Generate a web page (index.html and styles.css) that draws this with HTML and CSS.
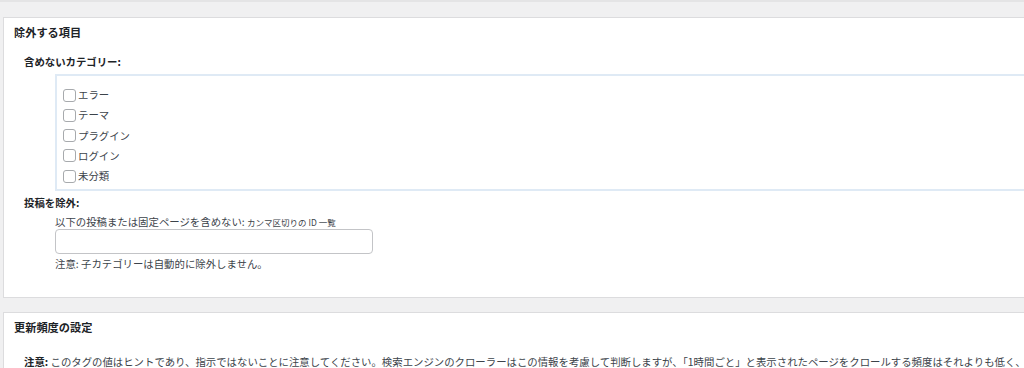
FILE: index.html
```html
<!DOCTYPE html>
<html lang="ja">
<head>
    <meta charset="UTF-8">
    <meta name="viewport" content="width=device-width, initial-scale=1.0">
    <title>除外する項目</title>
    <link rel="stylesheet" href="styles.css">
</head>
<body>
    <div class="prev-edge"></div>

    <div class="postbox">
        <h2 class="postbox-title">除外する項目</h2>
        <div class="inside">
            <h4 class="field-label">含めないカテゴリー:</h4>
            <ul class="category-list">
                <li><label><input type="checkbox"> エラー</label></li>
                <li><label><input type="checkbox"> テーマ</label></li>
                <li><label><input type="checkbox"> プラグイン</label></li>
                <li><label><input type="checkbox"> ログイン</label></li>
                <li><label><input type="checkbox"> 未分類</label></li>
            </ul>

            <h4 class="field-label second">投稿を除外:</h4>
            <div class="field">
                <label class="field-desc" for="excludePosts">以下の投稿または固定ページを含めない: <small>カンマ区切りの ID 一覧</small></label>
                <input type="text" id="excludePosts" class="text-input">
                <p class="note">注意: 子カテゴリーは自動的に除外しません。</p>
            </div>
        </div>
    </div>

    <div class="postbox">
        <h2 class="postbox-title">更新頻度の設定</h2>
        <div class="inside">
            <p class="hint"><b>注意:</b> このタグの値はヒントであり、指示ではないことに注意してください。検索エンジンのクローラーはこの情報を考慮して判断しますが、「1時間ごと」と表示されたページをクロールする頻度はそれよりも低く、「年に1度」と表示されたページをより頻繁にクロールする可能性があります。</p>
        </div>
    </div>
</body>
</html>
```

FILE: styles.css
```css
body {
    margin: 0;
    background: #f0f0f1;
    font-family: "Noto Sans CJK JP", "Noto Sans", sans-serif;
    font-size: 10.4px;
    color: #3c434a;
    overflow: hidden;
}
.prev-edge {
    height: 2px;
    background: #e4e4e5;
    margin-bottom: 15px;
}
.postbox {
    margin: 0 0 14px 3px;
    background: #fff;
    border: 1px solid #dcdcde;
    border-right: none;
    overflow: hidden;
}
.postbox-title {
    margin: 0;
    padding: 7px 10px;
    font-size: 11.2px;
    line-height: 15px;
    font-weight: 700;
    color: #1d2327;
}
.inside {
    padding: 0 0 26px 20px;
}
.field-label {
    margin: 7px 0 0;
    font-size: 10.4px;
    line-height: 15px;
    font-weight: 700;
    color: #1d2327;
}
.field-label.second {
    margin-top: 4px;
}
.category-list {
    list-style: none;
    margin: 5px 0 0 31px;
    padding: 9px 0 3px 6px;
    border: 2px solid #dfeaf5;
    border-right: none;
}
.category-list li {
    line-height: 20.25px;
    height: 20.25px;
}
.category-list label {
    display: flex;
    align-items: center;
    gap: 2px;
}
.category-list input {
    appearance: none;
    margin: 0;
    width: 13px;
    height: 13px;
    border: 1px solid #a7aaad;
    border-radius: 3px;
    background: #fff;
}
.field {
    margin: 5px 0 0 31px;
}
.field-desc {
    display: block;
    line-height: 14px;
}
.field-desc small {
    font-size: 8.5px;
}
.text-input {
    display: block;
    box-sizing: border-box;
    width: 318px;
    height: 25px;
    margin: 0;
    border: 1px solid #c3c4c7;
    border-radius: 4px;
    background: #fff;
}
.note {
    margin: 3px 0 0;
    line-height: 14px;
}
.hint {
    margin: 12px 0 0;
    line-height: 15px;
    white-space: nowrap;
}
.hint b {
    color: #1d2327;
}
```
